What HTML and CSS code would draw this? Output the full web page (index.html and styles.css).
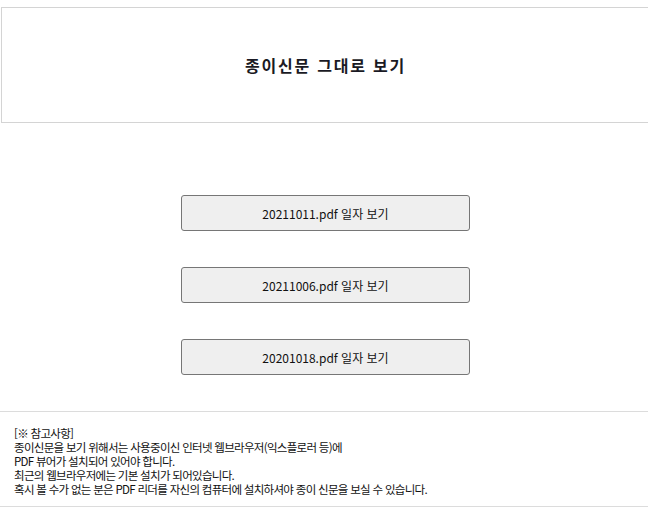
FILE: index.html
```html
<!DOCTYPE html>
<html lang="ko">
<head>
    <meta charset="UTF-8">
    <meta name="viewport" content="width=device-width, initial-scale=1.0">
    <title>종이신문 그대로 보기</title>
    <link rel="stylesheet" href="styles.css">
</head>
<body>
    <div class="page">
        <div class="header">
            <h1>종이신문 그대로 보기</h1>
        </div>
        <div class="pdf-list">
            <button type="button" class="pdf-btn">20211011.pdf 일자 보기</button>
            <button type="button" class="pdf-btn">20211006.pdf 일자 보기</button>
            <button type="button" class="pdf-btn">20201018.pdf 일자 보기</button>
        </div>
        <div class="notice">
            <p>[※ 참고사항]<br>
            종이신문을 보기 위해서는 사용중이신 인터넷 웹브라우저(익스플로러 등)에<br>
            PDF 뷰어가 설치되어 있어야 합니다.<br>
            최근의 웹브라우저에는 기본 설치가 되어있습니다.<br>
            혹시 볼 수가 없는 분은 PDF 리더를 자신의 컴퓨터에 설치하셔야 종이 신문을 보실 수 있습니다.</p>
        </div>
    </div>
</body>
</html>
```

FILE: styles.css
```css
body {
    margin: 0;
    overflow-x: hidden;
    font-family: "Noto Sans CJK KR", "Noto Sans", sans-serif;
    color: #111;
    background: #fff;
}
.page {
    width: 650px;
    padding-top: 7px;
}
.header {
    height: 114px;
    margin-left: 1px;
    border: 1px solid #d4d4d4;
    display: flex;
    align-items: center;
    justify-content: center;
}
.header h1 {
    margin: 0;
    font-size: 16px;
    font-weight: bold;
    letter-spacing: 1.8px;
    color: #1a1a24;
}
.pdf-list {
    display: flex;
    flex-direction: column;
    align-items: center;
    gap: 36px;
    padding: 72px 0 36px;
}
.pdf-btn {
    width: 289px;
    height: 36px;
    margin-left: 1px;
    background: #efefef;
    border: 1px solid #767676;
    border-radius: 3px;
    font-family: inherit;
    font-size: 12px;
    color: #111;
    cursor: pointer;
}
.pdf-btn:hover {
    background: #e5e5e5;
}
.notice {
    border-top: 1px solid #dcdcdc;
    border-bottom: 1px solid #dcdcdc;
    padding: 14px 14px 10px;
}
.notice p {
    margin: 0;
    font-size: 11.5px;
    line-height: 14px;
    letter-spacing: -0.7px;
}
```
